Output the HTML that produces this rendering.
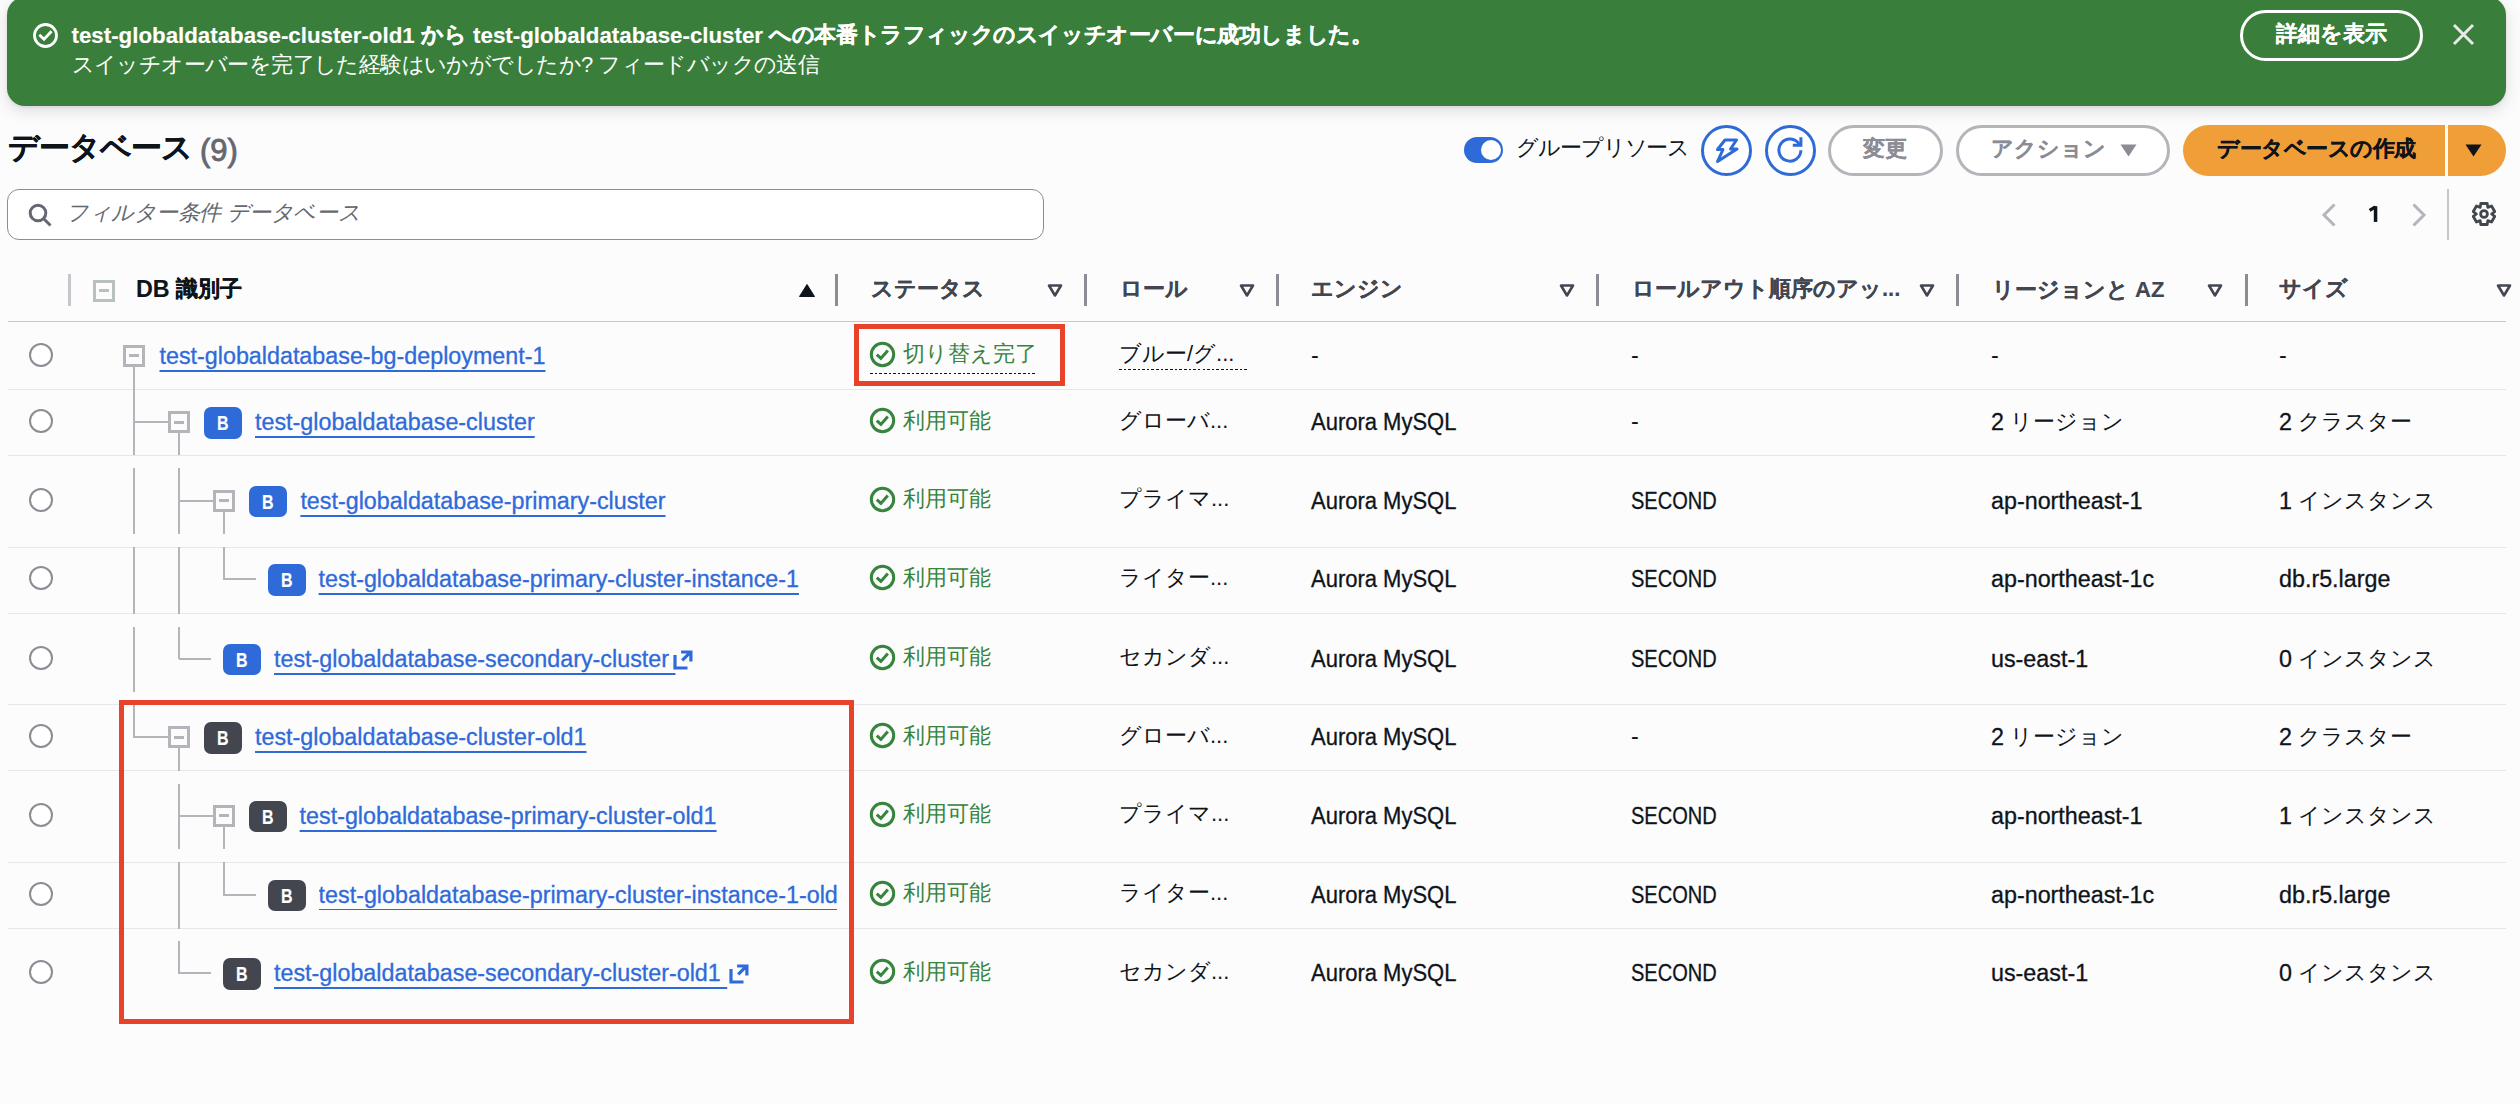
<!DOCTYPE html><html lang="ja"><head><meta charset="utf-8"><style>
html,body{margin:0;padding:0}
body{width:2520px;height:1104px;overflow:hidden;position:relative;background:#fcfcfd;font-family:"Liberation Sans",sans-serif;color:#0f141a}
.t{position:absolute;white-space:nowrap;line-height:30px;-webkit-text-stroke:0.3px currentColor}
.b{-webkit-text-stroke:0.15px currentColor}
.r{position:absolute;box-sizing:border-box}
svg{position:absolute;overflow:visible}
.j{font-size:22px;-webkit-text-stroke:0;position:relative;top:-1px}
.b .j{-webkit-text-stroke:0.35px currentColor}
</style></head><body>
<div class="r" style="left:7px;top:-3px;width:2499px;height:109px;background:#397e3a;border-radius:18px;box-shadow:0 5px 16px rgba(0,7,22,0.13),0 1px 3px rgba(0,7,22,0.08)"></div>
<svg style="left:33px;top:23px" width="25" height="25" viewBox="0 0 25 25"><circle cx="12.5" cy="12.5" r="11" fill="none" stroke="#fff" stroke-width="2.8"/><path d="M7.3 12.8 L11 16.3 L17.6 9.2" fill="none" stroke="#fff" stroke-width="2.8" stroke-linecap="square"/></svg>
<div class="t b" style="left:71.5px;top:20.7px;font-size:22.3px;color:#fff;font-weight:700;">test-globaldatabase-cluster-old1 <span class="j">から</span> test-globaldatabase-cluster <span class="j" style="letter-spacing:-0.4px">への本番トラフィックのスイッチオーバーに成功しました。</span></div>
<div class="t" style="left:71.5px;top:50.4px;font-size:22px;color:#fff;-webkit-text-stroke:0;letter-spacing:-0.59px;">スイッチオーバーを完了した経験はいかがでしたか? フィードバックの送信</div>
<div class="r" style="left:2240px;top:10px;width:183px;height:51px;border:3px solid #fff;border-radius:26px"></div>
<div class="t b" style="left:2276px;top:19.0px;font-size:22px;color:#fff;font-weight:700;">詳細を表示</div>
<svg style="left:2453px;top:24px" width="21" height="21"><path d="M1 1 L20 20 M20 1 L1 20" stroke="#e9e9ed" stroke-width="3"/></svg>
<div class="t b" style="left:8px;top:133.0px;font-size:31px;color:#0f141a;font-weight:700;letter-spacing:-1px;">データベース</div>
<div class="t" style="left:200px;top:136.0px;font-size:31px;color:#656871;-webkit-text-stroke:0.9px #656871;">(9)</div>
<div class="r" style="left:1464px;top:137px;width:39px;height:26px;background:#2f6ad9;border-radius:13px"></div>
<div class="r" style="left:1480.5px;top:140.3px;width:20px;height:20px;background:#fff;border-radius:50%"></div>
<div class="t" style="left:1516px;top:133.0px;font-size:22px;color:#0f141a;-webkit-text-stroke:0;letter-spacing:-1.1px;">グループリソース</div>
<div class="r" style="left:1701px;top:125px;width:51px;height:51px;border:3px solid #2f6ad9;border-radius:50%;background:#fff"></div>
<div class="r" style="left:1765px;top:125px;width:51px;height:51px;border:3px solid #2f6ad9;border-radius:50%;background:#fff"></div>
<svg style="left:1715px;top:138px" width="25" height="26" viewBox="0 0 25 26"><path d="M10 2 H21.5 L15.5 11 H22 L2.5 23.5 L8 11.5 H2.5 Z" fill="none" stroke="#2f6ad9" stroke-width="3" stroke-linejoin="round"/></svg>
<svg style="left:1775px;top:135.3px" width="30" height="30" viewBox="0 0 30 30"><path d="M25.9 15.3 A11 11 0 1 1 24.2 9.2" fill="none" stroke="#2f6ad9" stroke-width="3"/><path d="M25.9 2.2 V10.3 H17.8" fill="none" stroke="#2f6ad9" stroke-width="3"/></svg>
<div class="r" style="left:1828px;top:125px;width:115px;height:51px;border:3px solid #b4b4bb;border-radius:26px;background:#fff"></div>
<div class="t b" style="left:1863px;top:134.0px;font-size:22px;color:#8c8c94;font-weight:700;">変更</div>
<div class="r" style="left:1956px;top:125px;width:214px;height:51px;border:3px solid #b4b4bb;border-radius:26px;background:#fff"></div>
<div class="t b" style="left:1991px;top:134.0px;font-size:22px;color:#8c8c94;font-weight:700;">アクション</div>
<svg style="left:2120px;top:144px" width="17" height="13"><path d="M0.5 0.5 H16.5 L8.5 12.5 Z" fill="#8c8c94"/></svg>
<div class="r" style="left:2183px;top:125px;width:262px;height:51px;background:#f09e37;border-radius:26px 0 0 26px"></div>
<div class="t b" style="left:2217px;top:134.0px;font-size:22px;color:#0f141a;font-weight:700;letter-spacing:-0.5px;">データベースの作成</div>
<div class="r" style="left:2448px;top:125px;width:58px;height:51px;background:#f09e37;border-radius:0 26px 26px 0"></div>
<svg style="left:2465px;top:144px" width="17" height="13"><path d="M0.5 0.5 H16.5 L8.5 12.5 Z" fill="#0f141a"/></svg>
<div class="r" style="left:7px;top:189px;width:1037px;height:51px;border:1.6px solid #8c8c94;border-radius:12px;background:#fff"></div>
<svg style="left:28px;top:203px" width="25" height="25" viewBox="0 0 25 25"><circle cx="10" cy="10" r="7.8" fill="none" stroke="#656871" stroke-width="3"/><path d="M15.5 15.5 L22.5 22.5" stroke="#656871" stroke-width="3"/></svg>
<div class="t" style="left:66px;top:198.0px;font-size:22px;color:#656871;-webkit-text-stroke:0;letter-spacing:-0.43px;font-style:italic">フィルター条件 データベース</div>
<svg style="left:2321px;top:203px" width="16" height="24"><path d="M13.5 1.5 L3 12 L13.5 22.5" fill="none" stroke="#b4b4bb" stroke-width="3"/></svg>
<svg style="left:2368px;top:205px" width="12" height="18"><path d="M1.6 5.4 L7.4 1.9" stroke="#0f141a" stroke-width="3.2"/><rect x="5.8" y="1.2" width="3.5" height="15.7" fill="#0f141a"/></svg>
<svg style="left:2411px;top:203px" width="16" height="24"><path d="M2.5 1.5 L13 12 L2.5 22.5" fill="none" stroke="#b4b4bb" stroke-width="3"/></svg>
<div class="r" style="left:2446.5px;top:189px;width:2px;height:51px;background:#c6c6cd"></div>
<svg style="left:2469.7px;top:200.4px" width="28" height="28" viewBox="0 0 28 28"><path d="M10.78 3.48 L17.22 3.48 L17.80 7.42 L21.50 5.96 L24.72 11.53 L21.60 14.00 L24.72 16.47 L21.50 22.04 L17.80 20.58 L17.22 24.52 L10.78 24.52 L10.20 20.58 L6.50 22.04 L3.28 16.47 L6.40 14.00 L3.28 11.53 L6.50 5.96 L10.20 7.42 Z" fill="none" stroke="#424650" stroke-width="2.8" stroke-linejoin="round"/><circle cx="14" cy="14" r="3.4" fill="none" stroke="#424650" stroke-width="2.8"/></svg>
<div class="r" style="left:68px;top:274px;width:3px;height:32px;background:#c6c6cd"></div>
<div class="r" style="left:835px;top:274px;width:3px;height:32px;background:#8c8c94"></div>
<div class="r" style="left:1084px;top:274px;width:3px;height:32px;background:#8c8c94"></div>
<div class="r" style="left:1276px;top:274px;width:3px;height:32px;background:#8c8c94"></div>
<div class="r" style="left:1596px;top:274px;width:3px;height:32px;background:#8c8c94"></div>
<div class="r" style="left:1956px;top:274px;width:3px;height:32px;background:#8c8c94"></div>
<div class="r" style="left:2244.5px;top:274px;width:3px;height:32px;background:#8c8c94"></div>
<div class="r" style="left:92.7px;top:279.7px;width:22px;height:22px;border:3px solid #b9c0c0;background:#fcfcfd"></div>
<div class="r" style="left:98.7px;top:289.2px;width:10px;height:3px;background:#b9c0c0"></div>
<div class="t b" style="left:136px;top:274.0px;font-size:23.3px;color:#0f141a;font-weight:700;">DB <span class="j">識別子</span></div>
<svg style="left:799px;top:284px" width="16" height="13"><path d="M8 0.5 L15.5 12.5 H0.5 Z" fill="#0f141a" stroke="#0f141a" stroke-width="1" stroke-linejoin="round"/></svg>
<div class="t b" style="left:871px;top:273.8px;font-size:22px;color:#424650;font-weight:700;">ステータス</div>
<svg style="left:1047px;top:284px" width="16" height="13"><path d="M2 1.5 H14 L8 11.5 Z" fill="none" stroke="#424650" stroke-width="2.6" stroke-linejoin="round"/></svg>
<div class="t b" style="left:1120px;top:273.8px;font-size:22px;color:#424650;font-weight:700;">ロール</div>
<svg style="left:1239px;top:284px" width="16" height="13"><path d="M2 1.5 H14 L8 11.5 Z" fill="none" stroke="#424650" stroke-width="2.6" stroke-linejoin="round"/></svg>
<div class="t b" style="left:1311px;top:273.8px;font-size:22px;color:#424650;font-weight:700;">エンジン</div>
<svg style="left:1559px;top:284px" width="16" height="13"><path d="M2 1.5 H14 L8 11.5 Z" fill="none" stroke="#424650" stroke-width="2.6" stroke-linejoin="round"/></svg>
<div class="t b" style="left:1632px;top:273.8px;font-size:22px;color:#424650;font-weight:700;">ロールアウト順序のアッ...</div>
<svg style="left:1919px;top:284px" width="16" height="13"><path d="M2 1.5 H14 L8 11.5 Z" fill="none" stroke="#424650" stroke-width="2.6" stroke-linejoin="round"/></svg>
<div class="t b" style="left:1992px;top:274.8px;font-size:22px;color:#424650;font-weight:700;">リージョンと AZ</div>
<svg style="left:2207px;top:284px" width="16" height="13"><path d="M2 1.5 H14 L8 11.5 Z" fill="none" stroke="#424650" stroke-width="2.6" stroke-linejoin="round"/></svg>
<div class="t b" style="left:2279px;top:273.8px;font-size:22px;color:#424650;font-weight:700;">サイズ</div>
<svg style="left:2496px;top:284px" width="16" height="13"><path d="M2 1.5 H14 L8 11.5 Z" fill="none" stroke="#424650" stroke-width="2.6" stroke-linejoin="round"/></svg>
<div class="r" style="left:8px;top:320.7px;width:2498px;height:1.6px;background:#c6c6cd"></div>
<div class="r" style="left:8px;top:388.5px;width:2498px;height:1.3px;background:#e6e6eb"></div>
<div class="r" style="left:28.6px;top:342.5px;width:24px;height:24px;border:2px solid #8c8c94;border-radius:50%;background:#fff"></div>
<div class="r" style="left:8px;top:454.5px;width:2498px;height:1.3px;background:#e6e6eb"></div>
<div class="r" style="left:28.6px;top:409px;width:24px;height:24px;border:2px solid #8c8c94;border-radius:50%;background:#fff"></div>
<div class="r" style="left:8px;top:546.5px;width:2498px;height:1.3px;background:#e6e6eb"></div>
<div class="r" style="left:28.6px;top:487.5px;width:24px;height:24px;border:2px solid #8c8c94;border-radius:50%;background:#fff"></div>
<div class="r" style="left:8px;top:613.0px;width:2498px;height:1.3px;background:#e6e6eb"></div>
<div class="r" style="left:28.6px;top:566px;width:24px;height:24px;border:2px solid #8c8c94;border-radius:50%;background:#fff"></div>
<div class="r" style="left:8px;top:704.0px;width:2498px;height:1.3px;background:#e6e6eb"></div>
<div class="r" style="left:28.6px;top:645.5px;width:24px;height:24px;border:2px solid #8c8c94;border-radius:50%;background:#fff"></div>
<div class="r" style="left:8px;top:770.0px;width:2498px;height:1.3px;background:#e6e6eb"></div>
<div class="r" style="left:28.6px;top:724px;width:24px;height:24px;border:2px solid #8c8c94;border-radius:50%;background:#fff"></div>
<div class="r" style="left:8px;top:861.5px;width:2498px;height:1.3px;background:#e6e6eb"></div>
<div class="r" style="left:28.6px;top:802.5px;width:24px;height:24px;border:2px solid #8c8c94;border-radius:50%;background:#fff"></div>
<div class="r" style="left:8px;top:928.0px;width:2498px;height:1.3px;background:#e6e6eb"></div>
<div class="r" style="left:28.6px;top:881.5px;width:24px;height:24px;border:2px solid #8c8c94;border-radius:50%;background:#fff"></div>
<div class="r" style="left:28.6px;top:960px;width:24px;height:24px;border:2px solid #8c8c94;border-radius:50%;background:#fff"></div>
<div class="r" style="left:122.69999999999999px;top:344.5px;width:22px;height:22px;border:3px solid #b4b4bb;background:#fcfcfd"></div>
<div class="r" style="left:128.7px;top:354.0px;width:10px;height:3px;background:#b4b4bb"></div>
<div class="r" style="left:132.7px;top:366.5px;width:2px;height:22.5px;background:#b4b4bb"></div>
<div class="t" style="left:159.5px;top:340.6px;font-size:23.3px;color:#2f6ad9;text-decoration:underline;text-decoration-thickness:2px;text-underline-offset:6px;">test-globaldatabase-bg-deployment-1</div>
<div class="r" style="left:132.7px;top:389px;width:2px;height:66px;background:#b4b4bb"></div>
<div class="r" style="left:133.7px;top:421px;width:34.10000000000002px;height:2px;background:#b4b4bb"></div>
<div class="r" style="left:167.8px;top:411px;width:22px;height:22px;border:3px solid #b4b4bb;background:#fcfcfd"></div>
<div class="r" style="left:173.8px;top:420.5px;width:10px;height:3px;background:#b4b4bb"></div>
<div class="r" style="left:177.8px;top:433px;width:2px;height:22px;background:#b4b4bb"></div>
<div class="r" style="left:204px;top:407px;width:38px;height:31.5px;background:#2f6ad9;border-radius:7px"></div>
<div class="t b" style="left:217.2px;top:408.2px;font-size:20px;color:#fff;font-weight:700;transform:scaleX(0.8);transform-origin:0 0;">B</div>
<div class="t" style="left:255px;top:407.1px;font-size:23.3px;color:#2f6ad9;text-decoration:underline;text-decoration-thickness:2px;text-underline-offset:6px;">test-globaldatabase-cluster</div>
<div class="r" style="left:132.7px;top:468px;width:2px;height:66px;background:#b4b4bb"></div>
<div class="r" style="left:177.8px;top:468px;width:2px;height:66px;background:#b4b4bb"></div>
<div class="r" style="left:178.8px;top:499.5px;width:34.0px;height:2px;background:#b4b4bb"></div>
<div class="r" style="left:212.8px;top:489.5px;width:22px;height:22px;border:3px solid #b4b4bb;background:#fcfcfd"></div>
<div class="r" style="left:218.8px;top:499.0px;width:10px;height:3px;background:#b4b4bb"></div>
<div class="r" style="left:222.8px;top:511.5px;width:2px;height:22.5px;background:#b4b4bb"></div>
<div class="r" style="left:249px;top:485.5px;width:38px;height:31.5px;background:#2f6ad9;border-radius:7px"></div>
<div class="t b" style="left:262.2px;top:486.7px;font-size:20px;color:#fff;font-weight:700;transform:scaleX(0.8);transform-origin:0 0;">B</div>
<div class="t" style="left:300.4px;top:485.6px;font-size:23.3px;color:#2f6ad9;text-decoration:underline;text-decoration-thickness:2px;text-underline-offset:6px;">test-globaldatabase-primary-cluster</div>
<div class="r" style="left:132.7px;top:547px;width:2px;height:66.5px;background:#b4b4bb"></div>
<div class="r" style="left:177.8px;top:547px;width:2px;height:66.5px;background:#b4b4bb"></div>
<div class="r" style="left:222.8px;top:547px;width:2px;height:33px;background:#b4b4bb"></div>
<div class="r" style="left:223.8px;top:578px;width:32.19999999999999px;height:2px;background:#b4b4bb"></div>
<div class="r" style="left:268px;top:564px;width:38px;height:31.5px;background:#2f6ad9;border-radius:7px"></div>
<div class="t b" style="left:281.2px;top:565.2px;font-size:20px;color:#fff;font-weight:700;transform:scaleX(0.8);transform-origin:0 0;">B</div>
<div class="t" style="left:318.6px;top:564.1px;font-size:23.3px;color:#2f6ad9;text-decoration:underline;text-decoration-thickness:2px;text-underline-offset:6px;">test-globaldatabase-primary-cluster-instance-1</div>
<div class="r" style="left:132.7px;top:626.5px;width:2px;height:65.0px;background:#b4b4bb"></div>
<div class="r" style="left:177.8px;top:626.5px;width:2px;height:32.5px;background:#b4b4bb"></div>
<div class="r" style="left:178.8px;top:657.5px;width:32.19999999999999px;height:2px;background:#b4b4bb"></div>
<div class="r" style="left:223px;top:643.5px;width:38px;height:31.5px;background:#2f6ad9;border-radius:7px"></div>
<div class="t b" style="left:236.2px;top:644.7px;font-size:20px;color:#fff;font-weight:700;transform:scaleX(0.8);transform-origin:0 0;">B</div>
<div class="t" style="left:274px;top:643.6px;font-size:23.3px;color:#2f6ad9;text-decoration:underline;text-decoration-thickness:2px;text-underline-offset:6px;">test-globaldatabase-secondary-cluster&nbsp;</div>
<div class="r" style="left:132.7px;top:704.5px;width:2px;height:33.5px;background:#b4b4bb"></div>
<div class="r" style="left:133.7px;top:736px;width:34.10000000000002px;height:2px;background:#b4b4bb"></div>
<div class="r" style="left:167.8px;top:726px;width:22px;height:22px;border:3px solid #b4b4bb;background:#fcfcfd"></div>
<div class="r" style="left:173.8px;top:735.5px;width:10px;height:3px;background:#b4b4bb"></div>
<div class="r" style="left:177.8px;top:748px;width:2px;height:22.5px;background:#b4b4bb"></div>
<div class="r" style="left:204px;top:722px;width:38px;height:31.5px;background:#43464f;border-radius:7px"></div>
<div class="t b" style="left:217.2px;top:723.2px;font-size:20px;color:#fff;font-weight:700;transform:scaleX(0.8);transform-origin:0 0;">B</div>
<div class="t" style="left:255px;top:722.1px;font-size:23.3px;color:#2f6ad9;text-decoration:underline;text-decoration-thickness:2px;text-underline-offset:6px;">test-globaldatabase-cluster-old1</div>
<div class="r" style="left:177.8px;top:783.5px;width:2px;height:65.5px;background:#b4b4bb"></div>
<div class="r" style="left:178.8px;top:814.5px;width:34.0px;height:2px;background:#b4b4bb"></div>
<div class="r" style="left:212.8px;top:804.5px;width:22px;height:22px;border:3px solid #b4b4bb;background:#fcfcfd"></div>
<div class="r" style="left:218.8px;top:814.0px;width:10px;height:3px;background:#b4b4bb"></div>
<div class="r" style="left:222.8px;top:826.5px;width:2px;height:22.5px;background:#b4b4bb"></div>
<div class="r" style="left:249px;top:800.5px;width:38px;height:31.5px;background:#43464f;border-radius:7px"></div>
<div class="t b" style="left:262.2px;top:801.7px;font-size:20px;color:#fff;font-weight:700;transform:scaleX(0.8);transform-origin:0 0;">B</div>
<div class="t" style="left:299.6px;top:800.6px;font-size:23.3px;color:#2f6ad9;text-decoration:underline;text-decoration-thickness:2px;text-underline-offset:6px;">test-globaldatabase-primary-cluster-old1</div>
<div class="r" style="left:177.8px;top:862px;width:2px;height:66.5px;background:#b4b4bb"></div>
<div class="r" style="left:222.8px;top:862px;width:2px;height:33.5px;background:#b4b4bb"></div>
<div class="r" style="left:223.8px;top:893.5px;width:32.19999999999999px;height:2px;background:#b4b4bb"></div>
<div class="r" style="left:268px;top:879.5px;width:38px;height:31.5px;background:#43464f;border-radius:7px"></div>
<div class="t b" style="left:281.2px;top:880.7px;font-size:20px;color:#fff;font-weight:700;transform:scaleX(0.8);transform-origin:0 0;">B</div>
<div class="t" style="left:318.6px;top:879.6px;font-size:23.3px;color:#2f6ad9;text-decoration:underline;text-decoration-thickness:2px;text-underline-offset:6px;overflow:hidden;width:518.4px;">test-globaldatabase-primary-cluster-instance-1-old1</div>
<div class="r" style="left:177.8px;top:941.0px;width:2px;height:32.5px;background:#b4b4bb"></div>
<div class="r" style="left:178.8px;top:972px;width:32.19999999999999px;height:2px;background:#b4b4bb"></div>
<div class="r" style="left:223px;top:958px;width:38px;height:31.5px;background:#43464f;border-radius:7px"></div>
<div class="t b" style="left:236.2px;top:959.2px;font-size:20px;color:#fff;font-weight:700;transform:scaleX(0.8);transform-origin:0 0;">B</div>
<div class="t" style="left:274px;top:958.1px;font-size:23.3px;color:#2f6ad9;text-decoration:underline;text-decoration-thickness:2px;text-underline-offset:6px;">test-globaldatabase-secondary-cluster-old1&nbsp;</div>
<svg style="left:673px;top:648.5px" width="20" height="22" viewBox="0 0 20 22"><path d="M2 6 V19 H14.5" fill="none" stroke="#2f6ad9" stroke-width="3.2"/><path d="M9.2 11.4 L16.8 3.8 M8.1 3 H17.9 V12.6" fill="none" stroke="#2f6ad9" stroke-width="3.2"/></svg>
<svg style="left:728.5px;top:963px" width="20" height="22" viewBox="0 0 20 22"><path d="M2 6 V19 H14.5" fill="none" stroke="#2f6ad9" stroke-width="3.2"/><path d="M9.2 11.4 L16.8 3.8 M8.1 3 H17.9 V12.6" fill="none" stroke="#2f6ad9" stroke-width="3.2"/></svg>
<svg style="left:870.3px;top:341.8px" width="25" height="25" viewBox="0 0 25 25"><circle cx="12.5" cy="12.5" r="11.2" fill="none" stroke="#37843c" stroke-width="3"/><path d="M6.8 12.6 L10.9 16.4 L17.8 8.4" fill="none" stroke="#37843c" stroke-width="3"/></svg>
<div class="t" style="left:903px;top:339.0px;font-size:22px;color:#37843c;-webkit-text-stroke:0;">切り替え完了</div>
<div class="t" style="left:1119px;top:339.0px;font-size:22px;color:#0f141a;-webkit-text-stroke:0;">ブルー/グ...</div>
<div class="t" style="left:1311px;top:339.5px;font-size:23.3px;color:#0f141a;-webkit-text-stroke:0;">-</div>
<div class="t" style="left:1631px;top:339.5px;font-size:23.3px;color:#0f141a;-webkit-text-stroke:0;">-</div>
<div class="t" style="left:1991px;top:339.5px;font-size:23.3px;color:#0f141a;-webkit-text-stroke:0;">-</div>
<div class="t" style="left:2279px;top:339.5px;font-size:23.3px;color:#0f141a;-webkit-text-stroke:0;">-</div>
<svg style="left:870.3px;top:408.3px" width="25" height="25" viewBox="0 0 25 25"><circle cx="12.5" cy="12.5" r="11.2" fill="none" stroke="#37843c" stroke-width="3"/><path d="M6.8 12.6 L10.9 16.4 L17.8 8.4" fill="none" stroke="#37843c" stroke-width="3"/></svg>
<div class="t" style="left:903px;top:405.5px;font-size:22px;color:#37843c;-webkit-text-stroke:0;">利用可能</div>
<div class="t" style="left:1119px;top:405.5px;font-size:22px;color:#0f141a;-webkit-text-stroke:0;">グローバ...</div>
<div class="t" style="left:1311px;top:407.0px;font-size:23.3px;color:#0f141a;transform:scaleX(0.944);transform-origin:0 0;">Aurora MySQL</div>
<div class="t" style="left:1631px;top:406.0px;font-size:23.3px;color:#0f141a;-webkit-text-stroke:0;">-</div>
<div class="t" style="left:1991px;top:407.0px;font-size:23.3px;color:#0f141a;">2 <span class="j">リージョン</span></div>
<div class="t" style="left:2279px;top:407.0px;font-size:23.3px;color:#0f141a;">2 <span class="j">クラスター</span></div>
<svg style="left:870.3px;top:486.8px" width="25" height="25" viewBox="0 0 25 25"><circle cx="12.5" cy="12.5" r="11.2" fill="none" stroke="#37843c" stroke-width="3"/><path d="M6.8 12.6 L10.9 16.4 L17.8 8.4" fill="none" stroke="#37843c" stroke-width="3"/></svg>
<div class="t" style="left:903px;top:484.0px;font-size:22px;color:#37843c;-webkit-text-stroke:0;">利用可能</div>
<div class="t" style="left:1119px;top:484.0px;font-size:22px;color:#0f141a;-webkit-text-stroke:0;">プライマ...</div>
<div class="t" style="left:1311px;top:485.5px;font-size:23.3px;color:#0f141a;transform:scaleX(0.944);transform-origin:0 0;">Aurora MySQL</div>
<div class="t" style="left:1631px;top:485.5px;font-size:23.3px;color:#0f141a;transform:scaleX(0.86);transform-origin:0 0;">SECOND</div>
<div class="t" style="left:1991px;top:485.5px;font-size:23.3px;color:#0f141a;">ap-northeast-1</div>
<div class="t" style="left:2279px;top:485.5px;font-size:23.3px;color:#0f141a;">1 <span class="j">インスタンス</span></div>
<svg style="left:870.3px;top:565.3px" width="25" height="25" viewBox="0 0 25 25"><circle cx="12.5" cy="12.5" r="11.2" fill="none" stroke="#37843c" stroke-width="3"/><path d="M6.8 12.6 L10.9 16.4 L17.8 8.4" fill="none" stroke="#37843c" stroke-width="3"/></svg>
<div class="t" style="left:903px;top:562.5px;font-size:22px;color:#37843c;-webkit-text-stroke:0;">利用可能</div>
<div class="t" style="left:1119px;top:562.5px;font-size:22px;color:#0f141a;-webkit-text-stroke:0;">ライター...</div>
<div class="t" style="left:1311px;top:564.0px;font-size:23.3px;color:#0f141a;transform:scaleX(0.944);transform-origin:0 0;">Aurora MySQL</div>
<div class="t" style="left:1631px;top:564.0px;font-size:23.3px;color:#0f141a;transform:scaleX(0.86);transform-origin:0 0;">SECOND</div>
<div class="t" style="left:1991px;top:564.0px;font-size:23.3px;color:#0f141a;">ap-northeast-1c</div>
<div class="t" style="left:2279px;top:564.0px;font-size:23.3px;color:#0f141a;">db.r5.large</div>
<svg style="left:870.3px;top:644.8px" width="25" height="25" viewBox="0 0 25 25"><circle cx="12.5" cy="12.5" r="11.2" fill="none" stroke="#37843c" stroke-width="3"/><path d="M6.8 12.6 L10.9 16.4 L17.8 8.4" fill="none" stroke="#37843c" stroke-width="3"/></svg>
<div class="t" style="left:903px;top:642.0px;font-size:22px;color:#37843c;-webkit-text-stroke:0;">利用可能</div>
<div class="t" style="left:1119px;top:642.0px;font-size:22px;color:#0f141a;-webkit-text-stroke:0;">セカンダ...</div>
<div class="t" style="left:1311px;top:643.5px;font-size:23.3px;color:#0f141a;transform:scaleX(0.944);transform-origin:0 0;">Aurora MySQL</div>
<div class="t" style="left:1631px;top:643.5px;font-size:23.3px;color:#0f141a;transform:scaleX(0.86);transform-origin:0 0;">SECOND</div>
<div class="t" style="left:1991px;top:643.5px;font-size:23.3px;color:#0f141a;">us-east-1</div>
<div class="t" style="left:2279px;top:643.5px;font-size:23.3px;color:#0f141a;">0 <span class="j">インスタンス</span></div>
<svg style="left:870.3px;top:723.3px" width="25" height="25" viewBox="0 0 25 25"><circle cx="12.5" cy="12.5" r="11.2" fill="none" stroke="#37843c" stroke-width="3"/><path d="M6.8 12.6 L10.9 16.4 L17.8 8.4" fill="none" stroke="#37843c" stroke-width="3"/></svg>
<div class="t" style="left:903px;top:720.5px;font-size:22px;color:#37843c;-webkit-text-stroke:0;">利用可能</div>
<div class="t" style="left:1119px;top:720.5px;font-size:22px;color:#0f141a;-webkit-text-stroke:0;">グローバ...</div>
<div class="t" style="left:1311px;top:722.0px;font-size:23.3px;color:#0f141a;transform:scaleX(0.944);transform-origin:0 0;">Aurora MySQL</div>
<div class="t" style="left:1631px;top:721.0px;font-size:23.3px;color:#0f141a;-webkit-text-stroke:0;">-</div>
<div class="t" style="left:1991px;top:722.0px;font-size:23.3px;color:#0f141a;">2 <span class="j">リージョン</span></div>
<div class="t" style="left:2279px;top:722.0px;font-size:23.3px;color:#0f141a;">2 <span class="j">クラスター</span></div>
<svg style="left:870.3px;top:801.8px" width="25" height="25" viewBox="0 0 25 25"><circle cx="12.5" cy="12.5" r="11.2" fill="none" stroke="#37843c" stroke-width="3"/><path d="M6.8 12.6 L10.9 16.4 L17.8 8.4" fill="none" stroke="#37843c" stroke-width="3"/></svg>
<div class="t" style="left:903px;top:799.0px;font-size:22px;color:#37843c;-webkit-text-stroke:0;">利用可能</div>
<div class="t" style="left:1119px;top:799.0px;font-size:22px;color:#0f141a;-webkit-text-stroke:0;">プライマ...</div>
<div class="t" style="left:1311px;top:800.5px;font-size:23.3px;color:#0f141a;transform:scaleX(0.944);transform-origin:0 0;">Aurora MySQL</div>
<div class="t" style="left:1631px;top:800.5px;font-size:23.3px;color:#0f141a;transform:scaleX(0.86);transform-origin:0 0;">SECOND</div>
<div class="t" style="left:1991px;top:800.5px;font-size:23.3px;color:#0f141a;">ap-northeast-1</div>
<div class="t" style="left:2279px;top:800.5px;font-size:23.3px;color:#0f141a;">1 <span class="j">インスタンス</span></div>
<svg style="left:870.3px;top:880.8px" width="25" height="25" viewBox="0 0 25 25"><circle cx="12.5" cy="12.5" r="11.2" fill="none" stroke="#37843c" stroke-width="3"/><path d="M6.8 12.6 L10.9 16.4 L17.8 8.4" fill="none" stroke="#37843c" stroke-width="3"/></svg>
<div class="t" style="left:903px;top:878.0px;font-size:22px;color:#37843c;-webkit-text-stroke:0;">利用可能</div>
<div class="t" style="left:1119px;top:878.0px;font-size:22px;color:#0f141a;-webkit-text-stroke:0;">ライター...</div>
<div class="t" style="left:1311px;top:879.5px;font-size:23.3px;color:#0f141a;transform:scaleX(0.944);transform-origin:0 0;">Aurora MySQL</div>
<div class="t" style="left:1631px;top:879.5px;font-size:23.3px;color:#0f141a;transform:scaleX(0.86);transform-origin:0 0;">SECOND</div>
<div class="t" style="left:1991px;top:879.5px;font-size:23.3px;color:#0f141a;">ap-northeast-1c</div>
<div class="t" style="left:2279px;top:879.5px;font-size:23.3px;color:#0f141a;">db.r5.large</div>
<svg style="left:870.3px;top:959.3px" width="25" height="25" viewBox="0 0 25 25"><circle cx="12.5" cy="12.5" r="11.2" fill="none" stroke="#37843c" stroke-width="3"/><path d="M6.8 12.6 L10.9 16.4 L17.8 8.4" fill="none" stroke="#37843c" stroke-width="3"/></svg>
<div class="t" style="left:903px;top:956.5px;font-size:22px;color:#37843c;-webkit-text-stroke:0;">利用可能</div>
<div class="t" style="left:1119px;top:956.5px;font-size:22px;color:#0f141a;-webkit-text-stroke:0;">セカンダ...</div>
<div class="t" style="left:1311px;top:958.0px;font-size:23.3px;color:#0f141a;transform:scaleX(0.944);transform-origin:0 0;">Aurora MySQL</div>
<div class="t" style="left:1631px;top:958.0px;font-size:23.3px;color:#0f141a;transform:scaleX(0.86);transform-origin:0 0;">SECOND</div>
<div class="t" style="left:1991px;top:958.0px;font-size:23.3px;color:#0f141a;">us-east-1</div>
<div class="t" style="left:2279px;top:958.0px;font-size:23.3px;color:#0f141a;">0 <span class="j">インスタンス</span></div>
<div class="r" style="left:870px;top:372.5px;width:167px;height:1.5px;background:repeating-linear-gradient(90deg,#0f141a 0 2.6px,transparent 2.6px 4.64px)"></div>
<div class="r" style="left:1118.5px;top:368.8px;width:129px;height:1.5px;background:repeating-linear-gradient(90deg,#0f141a 0 2.6px,transparent 2.6px 4.64px)"></div>
<div class="r" style="left:854px;top:323.8px;width:210.5px;height:62px;border:5px solid #e8422a"></div>
<div class="r" style="left:118.5px;top:699.5px;width:735px;height:324.5px;border:5px solid #e8422a"></div>
</body></html>
